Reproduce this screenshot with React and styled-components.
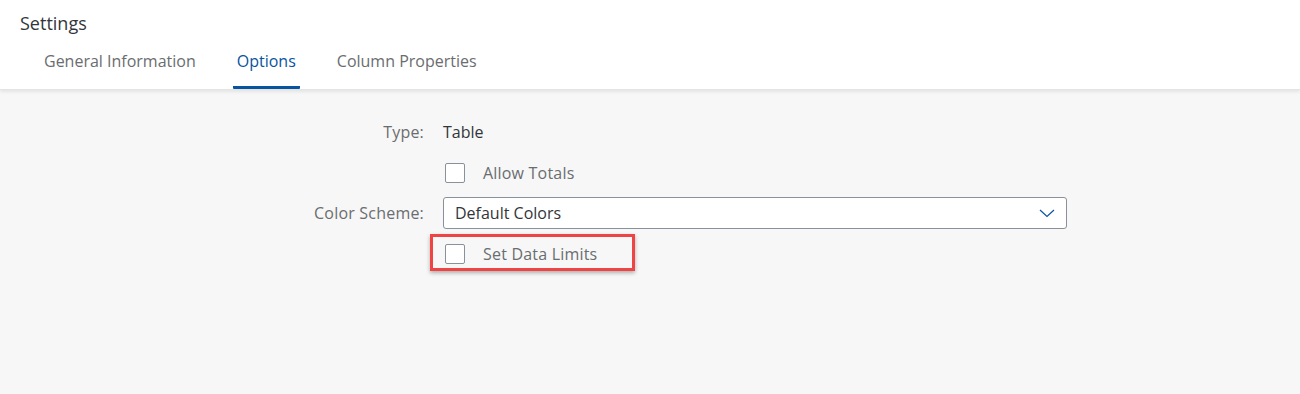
import styled, { createGlobalStyle } from 'styled-components'

const GlobalStyle = createGlobalStyle`
    html, body {
        margin: 0;
        padding: 0;
        background: #f7f7f7;
        font-family: "Open Sans", "Liberation Sans", Arial, sans-serif;
    }
`

const Page = styled.div`
    width: 1300px;
    height: 394px;
    background: #f7f7f7;
    overflow: hidden;
`

const Header = styled.header`
    background: #ffffff;
    border-bottom: 1px solid #e4e4e4;
    box-shadow: 0 2px 3px rgba(0, 0, 0, 0.08);
`

const Title = styled.h1`
    margin: 0;
    padding: 11px 0 0 20px;
    font-size: 18px;
    font-weight: normal;
    color: #32363a;
    line-height: 24px;
`

const TabBar = styled.nav`
    display: flex;
    gap: 33px;
    padding: 0 0 0 40px;
    margin-top: 15px;
`

const Tab = styled.div`
    padding: 0 4px;
    height: 39px;
    line-height: 22px;
    font-size: 16px;
    box-sizing: border-box;
    color: ${props => (props.active ? '#0854a0' : '#6a6d70')};
    border-bottom: 3px solid ${props => (props.active ? '#0854a0' : 'transparent')};
    border-radius: 1px;
`

const Form = styled.div`
    display: grid;
    grid-template-columns: 424px 624px;
    grid-template-rows: 40px 41px 40px 42px;
    column-gap: 19px;
    align-items: center;
    padding-top: 22px;
`

const Label = styled.div`
    text-align: right;
    font-size: 16px;
    letter-spacing: 0.2px;
    color: #6a6d70;
`

const Value = styled.div`
    font-size: 16px;
    color: #32363a;
`

const CheckRow = styled.label`
    position: relative;
    display: inline-flex;
    align-items: center;
    gap: 18px;
    padding-left: 2px;
    font-size: 16px;
    letter-spacing: 0.2px;
    color: #6a6d70;
    width: fit-content;
`

const Box = styled.span`
    width: 20px;
    height: 20px;
    box-sizing: border-box;
    background: #ffffff;
    border: 1px solid #89919a;
    border-radius: 2px;
`

const Highlight = styled.span`
    position: absolute;
    left: -13px;
    top: -9px;
    width: 205px;
    height: 37px;
    box-sizing: border-box;
    border: 3px solid #ee4444;
    box-shadow: 0 2px 4px rgba(0, 0, 0, 0.3);
    pointer-events: none;
`

const Select = styled.div`
    display: flex;
    align-items: center;
    justify-content: space-between;
    height: 32px;
    box-sizing: border-box;
    background: #ffffff;
    border: 1px solid #89919a;
    border-radius: 3px;
    padding: 0 11px 0 11px;
    font-size: 16px;
    color: #32363a;
`

const Spacer = styled.div``

function Checkbox({ label, highlighted }) {
    return (
        <CheckRow>
            <Box />
            {label}
            {highlighted && <Highlight />}
        </CheckRow>
    )
}

function Chevron() {
    return (
        <svg width="16" height="9" viewBox="0 0 16 9">
            <polyline points="1,1 8,7.5 15,1" fill="none" stroke="#0854a0" strokeWidth="1.2" />
        </svg>
    )
}

export default function App() {
    return (
        <Page>
            <GlobalStyle />
            <Header>
                <Title>Settings</Title>
                <TabBar>
                    <Tab>General Information</Tab>
                    <Tab active>Options</Tab>
                    <Tab>Column Properties</Tab>
                </TabBar>
            </Header>
            <Form>
                <Label>Type:</Label>
                <Value>Table</Value>

                <Spacer />
                <Checkbox label="Allow Totals" />

                <Label>Color Scheme:</Label>
                <Select>
                    Default Colors
                    <Chevron />
                </Select>

                <Spacer />
                <Checkbox label="Set Data Limits" highlighted />
            </Form>
        </Page>
    )
}
